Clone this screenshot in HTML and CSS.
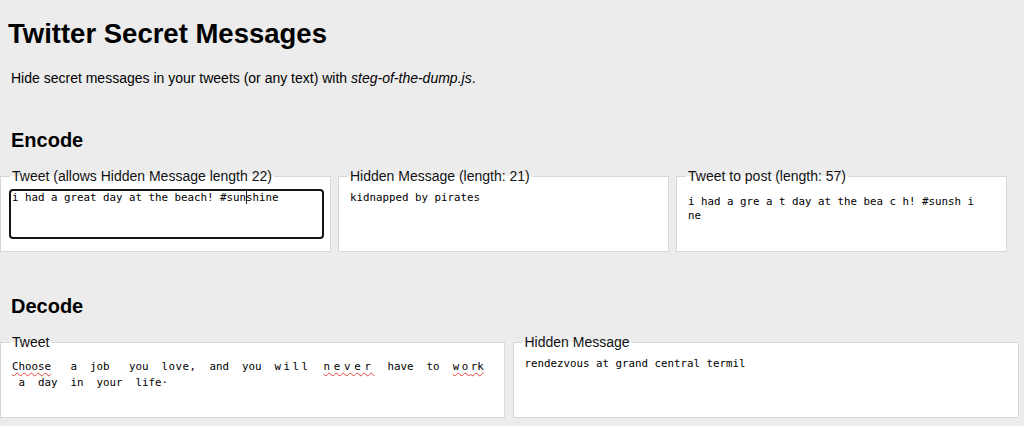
FILE: index.html
```html
<!DOCTYPE html>
<html lang="en">
<head>
<meta charset="utf-8">
<title>Twitter Secret Messages</title>
<link rel="stylesheet" href="styles.css">
</head>
<body>
<header class="intro">
  <h1 class="title">Twitter Secret Messages</h1>
  <p class="lead">Hide secret messages in your tweets (or any text) with <em>steg-of-the-dump.js</em>.</p>
</header>

<section class="section">
  <h2 class="section-title">Encode</h2>
  <div class="row row-encode">
    <fieldset class="panel">
      <legend class="panel-legend">Tweet (allows Hidden Message length 22)</legend>
      <div class="field field-focused">i had a great day at the beach! #sun<span class="caret"></span>shine</div>
    </fieldset>
    <fieldset class="panel">
      <legend class="panel-legend">Hidden Message (length: 21)</legend>
      <div class="field">kidnapped by pirates</div>
    </fieldset>
    <fieldset class="panel">
      <legend class="panel-legend">Tweet to post (length: 57)</legend>
      <div class="field field-output">i had a gre a t day at the bea c h! #sunsh i
ne</div>
    </fieldset>
  </div>
</section>

<section class="section section-decode">
  <h2 class="section-title">Decode</h2>
  <div class="row row-decode">
    <fieldset class="panel panel-tweet">
      <legend class="panel-legend">Tweet</legend>
      <div class="field field-tweet"><span class="spell">Choose</span>   a  job   you  <span class="loose">love,</span>  and  you  <span class="wide">will</span>  <span class="spell spread">never</span>  have  to  <span class="spell"><span class="wide">wo</span>rk</span>
 a  day  in  your  life·</div>
    </fieldset>
    <fieldset class="panel panel-hidden">
      <legend class="panel-legend">Hidden Message</legend>
      <div class="field">rendezvous at grand central termil</div>
    </fieldset>
  </div>
</section>
</body>
</html>
```

FILE: styles.css
```css
html, body {
  margin: 0;
  padding: 0;
}

body {
  background: #ececec;
  color: #000;
  font-family: "Liberation Sans", Arial, sans-serif;
  width: 1024px;
  height: 426px;
  overflow: hidden;
}

.intro {
  padding: 0 8px;
}

.title {
  margin: 18px 0 0 0;
  font-size: 27.5px;
  line-height: 32px;
  font-weight: bold;
}

.lead {
  margin: 20px 0 0 3px;
  font-size: 14px;
  line-height: 16px;
}

.section-title {
  margin: 42px 0 16px 11px;
  font-size: 20px;
  line-height: 24px;
  font-weight: bold;
}

.row {
  display: flex;
  align-items: flex-start;
}

.row-encode {
  gap: 7.5px;
}

.row-encode .panel {
  width: 330.5px;
}

.row-decode {
  gap: 7.5px;
}

.panel-tweet {
  width: 505px;
}

.panel-hidden {
  width: 506.5px;
}

.panel {
  box-sizing: border-box;
  margin: 0;
  padding: 4px 6px 12px 8px;
  border: 1px solid #d8d8d8;
  background: #fff;
  min-width: 0;
  flex: none;
}

.panel-legend {
  padding: 0 2px;
  margin-left: 1px;
  font-size: 14px;
  line-height: 17px;
  color: #111;
}

.field {
  box-sizing: border-box;
  height: 50px;
  padding: 0 1px;
  border: 2px solid transparent;
  border-radius: 4px;
  font-family: "DejaVu Sans Mono", "Liberation Mono", monospace;
  font-size: 10.8px;
  line-height: 14px;
  white-space: pre;
  color: #000;
}

.field-focused {
  border-color: #161616;
}

.caret {
  display: inline-block;
  width: 1px;
  height: 13px;
  margin-right: -1px;
  background: #222;
  vertical-align: -3px;
}

.field-output {
  padding-top: 4px;
}

.field-tweet {
  padding-top: 2px;
  line-height: 16px;
}

.spell {
  text-decoration: underline wavy #e8403a;
  text-decoration-thickness: 1px;
  text-underline-offset: 2px;
}

.loose {
  letter-spacing: 0.5px;
}

.spread {
  letter-spacing: 3.7px;
}

.wide {
  letter-spacing: 2.5px;
}
```
